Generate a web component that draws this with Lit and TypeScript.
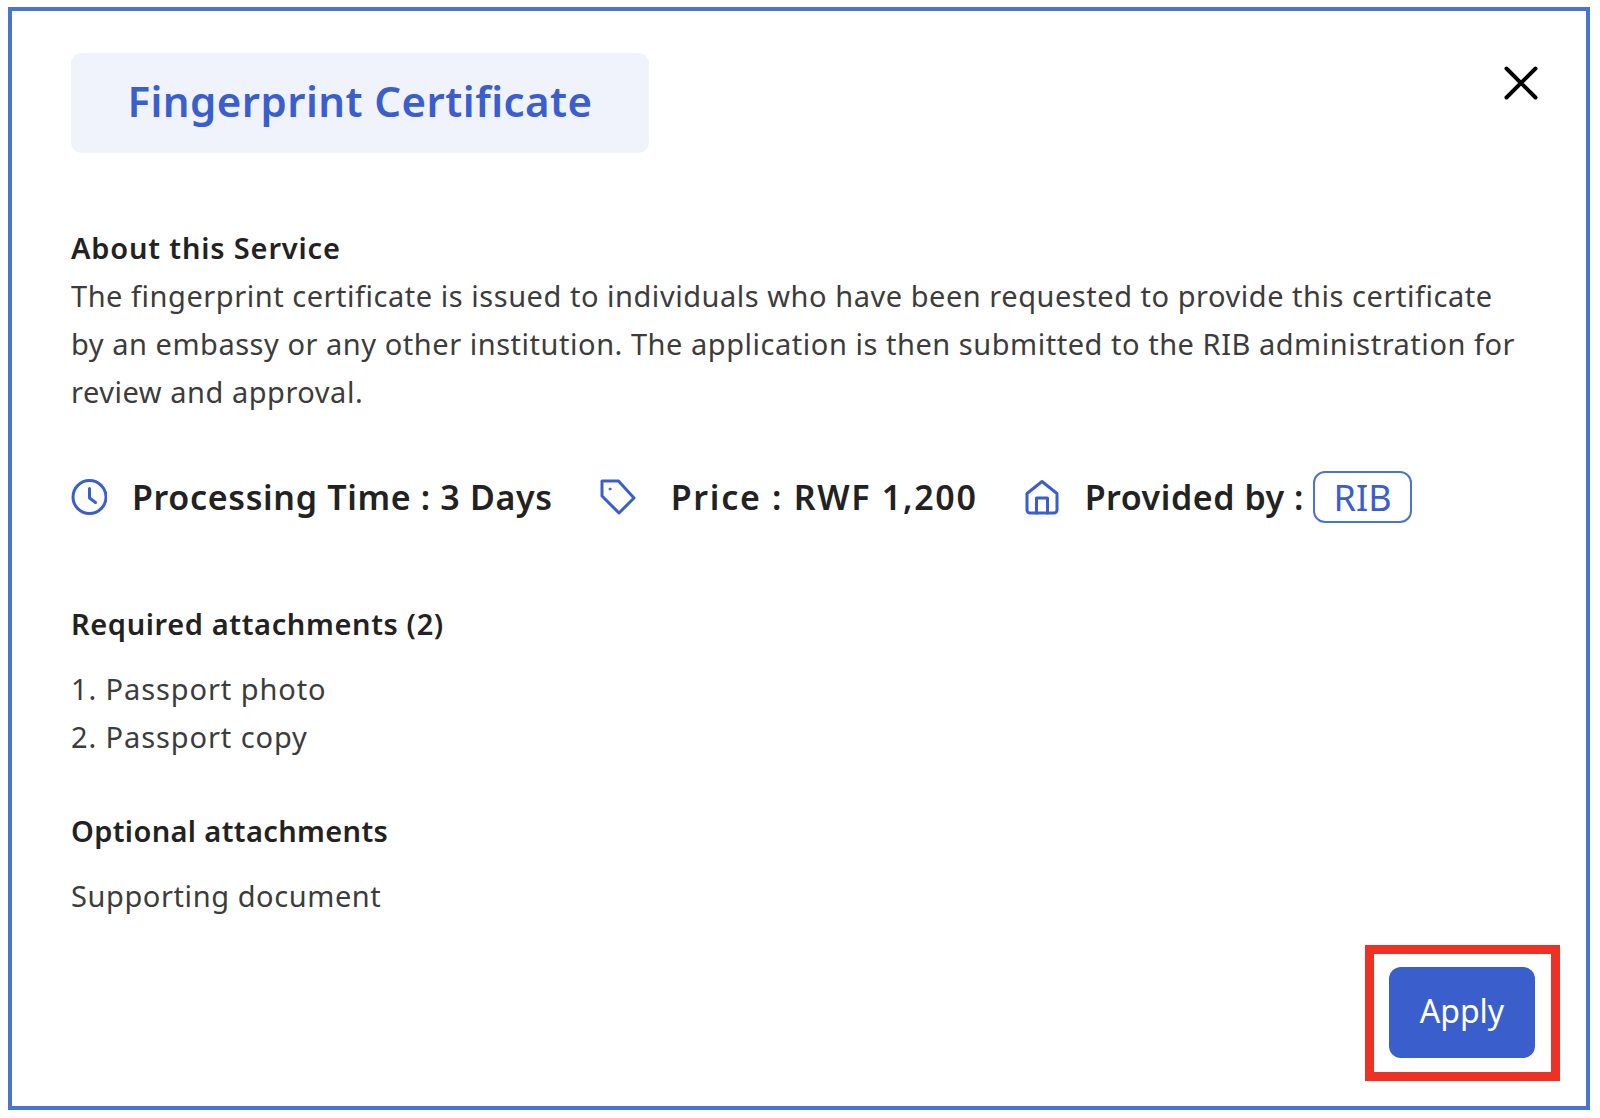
import { LitElement, html, css } from "lit";
import { customElement } from "lit/decorators.js";

@customElement("app-root")
export class AppRoot extends LitElement {
  static styles = css`
    :host {
      display: block;
      width: 1600px;
      height: 1118px;
      background: #fff;
      font-family: "Noto Sans", "Lato", sans-serif;
      font-variant-ligatures: common-ligatures;
      color: #2b2b2b;
      overflow: hidden;
    }
    .frame {
      box-sizing: border-box;
      margin: 7px 10px 8px 8px;
      height: 1103px;
      border: 4px solid #4a74d3;
      padding: 42px 26px 0 59px;
      display: flex;
      flex-direction: column;
    }
    .head {
      display: flex;
      justify-content: space-between;
      align-items: flex-start;
      height: 100px;
    }
    .title {
      box-sizing: border-box;
      width: 578px;
      height: 100px;
      padding-bottom: 5px;
      background: #f0f3fc;
      border-radius: 11px;
      display: flex;
      align-items: center;
      justify-content: center;
      color: #3a5fcd;
      font-size: 42px;
      font-weight: 600;
      letter-spacing: 0.45px;
    }
    .close {
      width: 34px;
      height: 34px;
      margin: 13px 22px 0 0;
      display: block;
    }
    .about {
      margin-top: 71px;
      font-size: 29px;
      line-height: 48px;
    }
    h3 {
      margin: 0;
      font-size: 29px;
      line-height: 48px;
      font-weight: 600;
      color: #222;
      letter-spacing: 0.62px;
    }
    .about h3 { letter-spacing: 0.83px; }
    p {
      margin: 0;
      max-width: 1450px;
      color: #3c3c3c;
      letter-spacing: 0.53px;
    }
    .meta {
      display: flex;
      align-items: center;
      height: 52px;
      margin-top: 55px;
      font-size: 34px;
      font-weight: 600;
      color: #222;
    }
    .item {
      display: flex;
      align-items: center;
    }
    .item svg {
      width: 36px;
      height: 36px;
      display: block;
      flex: none;
    }
    .t1 { margin-left: 25px; letter-spacing: 0.66px; }
    .i2 { margin-left: 47px; }
    .i2 .t1 { margin-left: 35px; letter-spacing: 1.7px; }
    .i3 { margin-left: 46px; }
    .i3 .t1 { letter-spacing: 0.55px; }
    .pill {
      box-sizing: border-box;
      width: 99px;
      height: 52px;
      margin-left: 9px;
      border: 2px solid #4a74d3;
      border-radius: 12px;
      color: #3a5fcd;
      font-size: 36px;
      font-weight: 400;
      display: flex;
      align-items: center;
      justify-content: center;
    }
    .req { margin-top: 77px; }
    .sec-list {
      font-size: 29px;
      line-height: 48px;
      color: #3c3c3c;
      margin-top: 17px;
      letter-spacing: 0.58px;
    }
    .steps { letter-spacing: 0.9px; }
    .opt { margin-top: 46px; letter-spacing: 0.36px; }
    .foot {
      margin-top: auto;
      margin-bottom: 25px;
      display: flex;
      justify-content: flex-end;
    }
    .mark {
      box-sizing: border-box;
      width: 195px;
      height: 136px;
      border: 9px solid #ee3124;
      padding: 13px 15px;
    }
    .apply {
      box-sizing: border-box;
      width: 146px;
      height: 91px;
      padding: 0 0 4px;
      border: 0;
      border-radius: 12px;
      background: #3a5fcd;
      color: #fff;
      font: 400 32px "Noto Sans", sans-serif;
      display: block;
    }
  `;

  render() {
    return html`
      <div class="frame">
        <div class="head">
          <div class="title">Fingerprint Certificate</div>
          <svg class="close" viewBox="0 0 34 34" fill="none" stroke="#000" stroke-width="4" stroke-linecap="round">
            <path d="M2.5 2.5 31.5 31.5M31.5 2.5 2.5 31.5" />
          </svg>
        </div>
        <div class="about">
          <h3>About this Service</h3>
          <p>
            The fingerprint certificate is issued to individuals who have been requested to provide this certificate
            by an embassy or any other institution. The application is then submitted to the RIB administration for
            review and approval.
          </p>
        </div>
        <div class="meta">
          <div class="item">
            <svg viewBox="0 0 36 36" fill="none" stroke="#3a5fcd" stroke-width="3" stroke-linecap="round" stroke-linejoin="round">
              <circle cx="18.5" cy="18" r="16.5" />
              <path d="M18.5 9.5V19l6 4.5" />
            </svg>
            <span class="t1">Processing Time : 3 Days</span>
          </div>
          <div class="item i2">
            <svg viewBox="0 0 36 36" fill="none" stroke="#3a5fcd" stroke-width="3" stroke-linecap="round" stroke-linejoin="round">
              <path d="M2 2H18.5L34 19 19 34 2 17Z" />
              <circle cx="10" cy="10" r="1" fill="#3a5fcd" stroke-width="1" />
            </svg>
            <span class="t1">Price : RWF 1,200</span>
          </div>
          <div class="item i3">
            <svg viewBox="0 0 36 36" fill="none" stroke="#3a5fcd" stroke-width="3" stroke-linecap="round" stroke-linejoin="round">
              <path d="M3 14.5 18 2.5l15 12V31a3 3 0 0 1-3 3H6a3 3 0 0 1-3-3Z" />
              <path d="M12.5 34V19h11V34" />
            </svg>
            <span class="t1">Provided by :</span>
            <span class="pill">RIB</span>
          </div>
        </div>
        <h3 class="req">Required attachments (2)</h3>
        <div class="sec-list steps">
          <div>1. Passport photo</div>
          <div>2. Passport copy</div>
        </div>
        <h3 class="opt">Optional attachments</h3>
        <div class="sec-list">Supporting document</div>
        <div class="foot">
          <div class="mark"><button class="apply">Apply</button></div>
        </div>
      </div>
    `;
  }
}
